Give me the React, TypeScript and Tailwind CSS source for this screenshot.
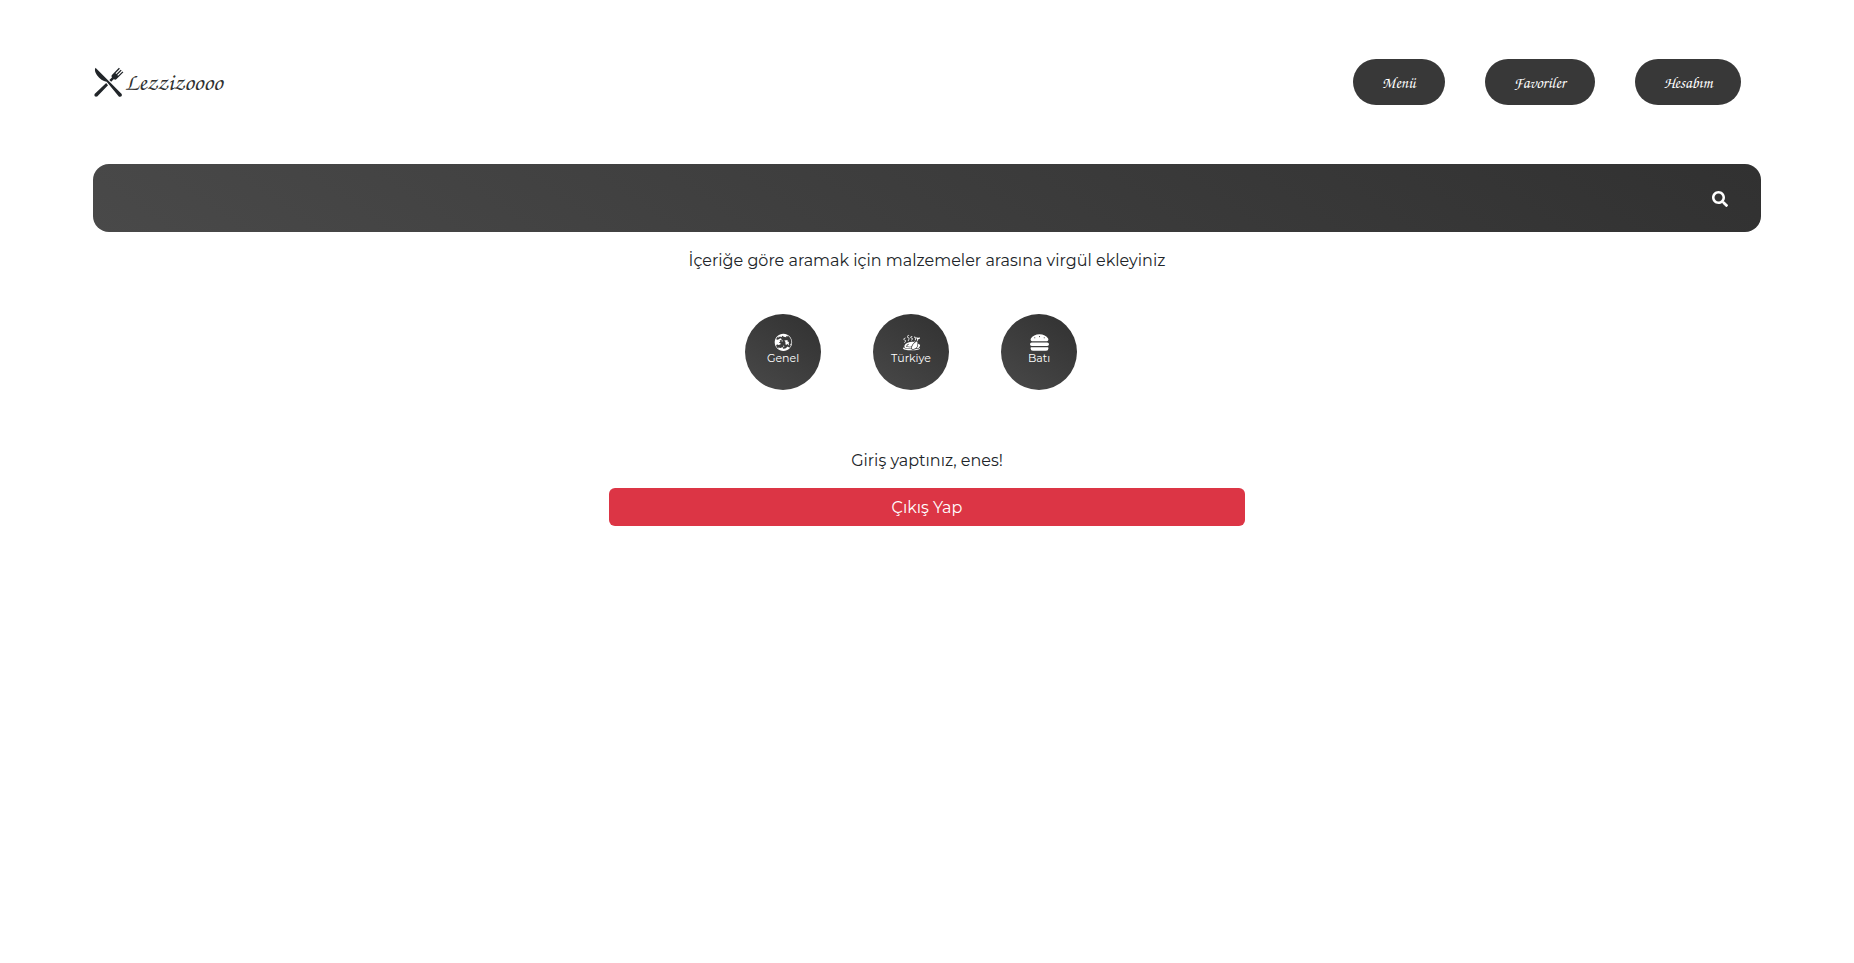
import type { ReactNode } from 'react';
import { GiKnifeFork, GiWorld, GiChickenOven } from 'react-icons/gi';
import { FaHamburger, FaSearch } from 'react-icons/fa';

const links = ['Menü', 'Favoriler', 'Hesabım'];

const cuisines: { label: string; icon: ReactNode }[] = [
  { label: 'Genel', icon: <GiWorld className="size-[19px]" /> },
  { label: 'Türkiye', icon: <GiChickenOven className="size-[19px]" /> },
  { label: 'Batı', icon: <FaHamburger className="size-[19px]" /> },
];

function Header() {
  return (
    <header className="flex items-center justify-between py-[59px] font-['TeX_Gyre_Chorus','Lobster_Two',cursive]">
      <a href="#" className="flex items-center text-2xl">
        <GiKnifeFork className="size-8" />
        <span className="pb-0.5 text-[#313131]">Lezzizoooo</span>
      </a>
      <nav className="flex gap-10 pr-5">
        {links.map((label) => (
          <a
            key={label}
            href="#"
            className="flex h-[46px] items-center rounded-full bg-[#383838] px-[29px] pt-0.5 text-base text-white"
          >
            {label}
          </a>
        ))}
      </nav>
    </header>
  );
}

function SearchBar() {
  return (
    <form
      role="search"
      onSubmit={(event) => event.preventDefault()}
      className="flex h-[68px] items-center rounded-2xl bg-linear-35 from-[#494949] to-[#313131] px-[33px] pt-0.5"
    >
      <input type="text" aria-label="Tarif ara" className="h-full min-w-0 flex-1 bg-transparent text-2xl text-white outline-none" />
      <button type="submit" aria-label="Ara" className="text-white">
        <FaSearch className="size-4" />
      </button>
    </form>
  );
}

function Cuisines() {
  return (
    <nav className="flex justify-center gap-[52px] pr-8">
      {cuisines.map(({ label, icon }) => (
        <a
          key={label}
          href="#"
          className="flex size-[76px] flex-col items-center rounded-full bg-linear-35 from-[#494949] to-[#313131] pt-[19px] text-white"
        >
          {icon}
          <span className="text-[11px] leading-3">{label}</span>
        </a>
      ))}
    </nav>
  );
}

export default function App() {
  return (
    <div className="px-[5%] font-[Montserrat,'Open_Sans',sans-serif] text-base text-[#212529]">
      <Header />
      <SearchBar />
      <p className="mt-[17px] text-center">İçeriğe göre aramak için malzemeler arasına virgül ekleyiniz</p>
      <div className="pt-[41px] pb-[59px]">
        <Cuisines />
      </div>
      <main className="mx-auto max-w-[636px] text-center">
        <p>Giriş yaptınız, enes!</p>
        <button type="button" className="mt-[15px] h-[38px] w-full rounded-md bg-[#dc3545] pt-0.5 text-white">
          Çıkış Yap
        </button>
      </main>
    </div>
  );
}
